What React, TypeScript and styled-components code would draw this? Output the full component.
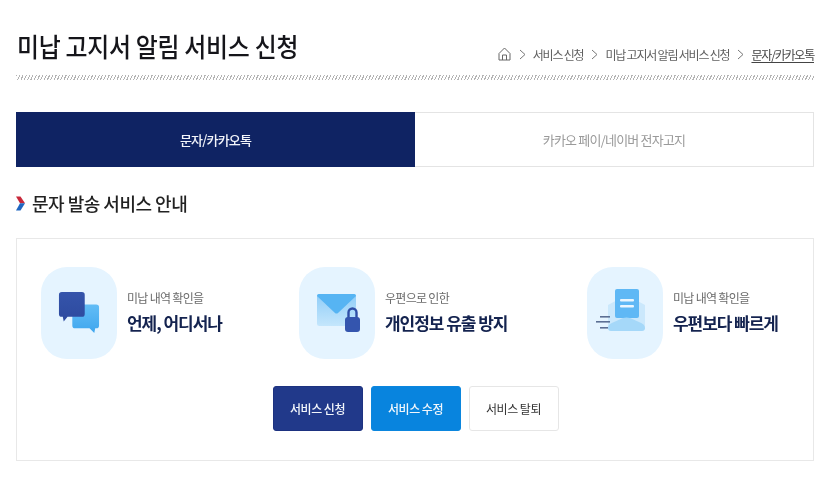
import React from "react";
import styled, { createGlobalStyle } from "styled-components";

const Global = createGlobalStyle`
  html, body { margin: 0; padding: 0; background: #fff; }
  body { font-family: "Noto Sans CJK KR", "Noto Sans", sans-serif; }
`;

const Page = styled.div`
  width: 816px;
  height: 484px;
  box-sizing: border-box;
  padding: 26px 2px 0 16px;
  overflow: hidden;
  filter: blur(0.35px);
`;

const Header = styled.header`
  height: 49px;
  box-sizing: border-box;
  display: flex;
  justify-content: space-between;
  align-items: flex-start;
`;

const Title = styled.h1`
  margin: 0;
  padding-left: 1px;
  font-size: 26px;
  line-height: 40px;
  font-weight: 500;
  color: #15151a;
  letter-spacing: -0.3px;
  transform: scaleX(0.92);
  transform-origin: left center;
`;

const Crumbs = styled.nav`
  display: flex;
  align-items: center;
  height: 20px;
  margin-top: 18px;
  font-size: 12px;
  letter-spacing: -1.2px;
  color: #5a5a5a;
`;

const Crumb = styled.span<{ $current?: boolean }>`
  text-decoration: ${(p) => (p.$current ? "underline" : "none")};
  text-underline-offset: 2px;
  color: ${(p) => (p.$current ? "#444" : "#5f5f5f")};
`;

const Chevron = styled.svg`
  width: 7px;
  height: 11px;
  margin: 0 7px 0 8px;
  fill: none;
  stroke: #777;
  stroke-width: 1;
`;

const Hatch = styled.div`
  height: 5px;
  background: repeating-linear-gradient(115deg, #b4b4b4 0 1px, #fff 1px 3px);
`;

const Tabs = styled.div`
  display: grid;
  grid-template-columns: 399px 399px;
  height: 55px;
  margin-top: 32px;
`;

const Tab = styled.div<{ $active?: boolean }>`
  display: flex;
  align-items: center;
  justify-content: center;
  box-sizing: border-box;
  font-size: 13px;
  letter-spacing: -0.8px;
  font-weight: ${(p) => (p.$active ? 500 : 400)};
  color: ${(p) => (p.$active ? "#f2f4fa" : "#9a9a9a")};
  background: ${(p) => (p.$active ? "#0f2363" : "#fff")};
  border: 1px solid ${(p) => (p.$active ? "#0f2363" : "#e4e4e4")};
  border-left-width: ${(p) => (p.$active ? "1px" : "0")};
`;

const SectionHead = styled.h2`
  display: flex;
  align-items: center;
  gap: 7px;
  margin: 22px 0 0;
  height: 28px;
  font-size: 18px;
  font-weight: 500;
  letter-spacing: -0.5px;
  color: #222;
`;

const Box = styled.section`
  box-sizing: border-box;
  height: 223px;
  margin-top: 21px;
  border: 1px solid #e8e8e8;
  padding: 28px 0 0 24px;
`;

const Features = styled.div`
  display: grid;
  grid-template-columns: 258px 288px 1fr;
`;

const Feature = styled.div`
  display: flex;
  align-items: center;
  gap: 10px;
`;

const Tile = styled.div`
  width: 76px;
  height: 92px;
  border-radius: 26px;
  background: #e5f4ff;
  display: flex;
  align-items: center;
  justify-content: center;
  flex: none;
`;

const TextCol = styled.div`
  display: flex;
  flex-direction: column;
  gap: 4px;
  margin-top: -2px;
`;

const Sub = styled.div`
  font-size: 12px;
  line-height: 18px;
  letter-spacing: -0.7px;
  color: #6b6b6b;
`;

const Strong = styled.div`
  font-size: 17px;
  line-height: 24px;
  font-weight: 700;
  letter-spacing: -1.05px;
  color: #14234f;
`;

const Buttons = styled.div`
  display: flex;
  justify-content: center;
  gap: 8px;
  margin: 27px 0 0 -24px;
  padding-left: 1px;
`;

const Button = styled.button<{ $variant: "navy" | "blue" | "plain" }>`
  width: 90px;
  height: 45px;
  box-sizing: border-box;
  border-radius: 3px;
  font-family: inherit;
  font-size: 12px;
  letter-spacing: -0.5px;
  padding: 0;
  font-weight: ${(p) => (p.$variant === "plain" ? 400 : 500)};
  color: ${(p) => (p.$variant === "plain" ? "#333" : "#f2f6fb")};
  background: ${(p) =>
    p.$variant === "navy" ? "#21398a" : p.$variant === "blue" ? "#0884de" : "#fff"};
  border: 1px solid
    ${(p) => (p.$variant === "navy" ? "#1d3280" : p.$variant === "blue" ? "#0b86de" : "#e6e6e6")};
`;

const Arrow = () => (
  <svg width="9" height="15" viewBox="0 0 9 15" aria-hidden="true">
    <path d="M0 0.5 L4.5 0.5 L9 7.2 L4 7.2 Z" fill="#c8283a" />
    <path d="M4 7.2 L9 7.2 L4.5 14.5 L0 14.5 Z" fill="#1f66c1" />
  </svg>
);

const HomeIcon = () => (
  <svg width="13" height="14" viewBox="0 0 13 14" fill="none" stroke="#666" strokeWidth="1" aria-hidden="true">
    <path d="M1 6.5 L6.5 1 L12 6.5 V13 H1 Z" />
    <path d="M4.5 13 V8 H8.5 V13" />
  </svg>
);

const Sep = () => (
  <Chevron viewBox="0 0 7 11" aria-hidden="true">
    <path d="M1 1 L6 5.5 L1 10" />
  </Chevron>
);

const ChatIcon = () => (
  <svg width="42" height="42" viewBox="0 0 44 44" aria-hidden="true">
    <defs>
      <linearGradient id="chatA" x1="0" y1="0" x2="0" y2="1">
        <stop offset="0" stopColor="#3554ab" />
        <stop offset="1" stopColor="#2d4a9e" />
      </linearGradient>
      <linearGradient id="chatB" x1="0" y1="0" x2="0" y2="1">
        <stop offset="0" stopColor="#63bdf6" />
        <stop offset="1" stopColor="#3fa6ee" />
      </linearGradient>
    </defs>
    <path d="M18 13 H40 a3 3 0 0 1 3 3 V35 a3 3 0 0 1 -3 3 h-1 l-1 5 -5 -5 H18 a3 3 0 0 1 -3 -3 V16 a3 3 0 0 1 3 -3 Z" fill="url(#chatB)" />
    <path d="M4 0 H25 a3 3 0 0 1 3 3 V23 a3 3 0 0 1 -3 3 H10 l-4 5 -1 -5 H4 a3 3 0 0 1 -3 -3 V3 a3 3 0 0 1 3 -3 Z" fill="url(#chatA)" />
  </svg>
);

const LockMailIcon = () => (
  <svg width="48" height="40" viewBox="-4 0 48 40" aria-hidden="true">
    <defs>
      <linearGradient id="mailBody" x1="0" y1="0" x2="0" y2="1">
        <stop offset="0" stopColor="#8fcdf8" />
        <stop offset="1" stopColor="#c4e6fc" />
      </linearGradient>
    </defs>
    <rect x="0" y="1" width="39" height="32" rx="2.5" fill="url(#mailBody)" />
    <path d="M0 3 a2 2 0 0 1 2 -2 H37 a2 2 0 0 1 2 2 L21 20 a2.5 2.5 0 0 1 -3 0 Z" fill="#56b4f3" />
    <path d="M31.5 25 v-5.5 a4 4 0 0 1 8 0 v5.5" fill="none" stroke="#2f4ea6" strokeWidth="2.4" />
    <rect x="28" y="24" width="15" height="15" rx="3" fill="#3455ae" />
  </svg>
);

const OpenMailIcon = () => (
  <svg width="58" height="48" viewBox="0 0 58 48" aria-hidden="true">
    <path d="M12 16 L30.5 6 L49 16 V40 H12 Z" fill="#cbe8fc" />
    <rect x="19" y="0" width="24" height="29" rx="2" fill="#5fb8f5" />
    <rect x="24" y="10" width="14" height="2.4" rx="1" fill="#eaf6ff" />
    <rect x="24" y="16" width="14" height="2.4" rx="1" fill="#eaf6ff" />
    <path d="M12 39 Q12 35 18 33 L27 29 Q30.5 28 34 29 L43 33 Q49 35 49 39 a3 3 0 0 1 -3 3 H15 a3 3 0 0 1 -3 -3 Z" fill="#a5d8f9" />
    <rect x="4" y="27" width="10" height="1.6" fill="#5c6f94" />
    <rect x="0" y="32" width="14" height="1.6" fill="#5c6f94" />
    <rect x="4" y="38" width="8" height="1.6" fill="#5c6f94" />
  </svg>
);

export default function App() {
  return (
    <Page>
      <Global />
      <Header>
        <Title>미납 고지서 알림 서비스 신청</Title>
        <Crumbs>
          <HomeIcon />
          <Sep />
          <Crumb>서비스 신청</Crumb>
          <Sep />
          <Crumb>미납 고지서 알림 서비스 신청</Crumb>
          <Sep />
          <Crumb $current>문자/카카오톡</Crumb>
        </Crumbs>
      </Header>
      <Hatch />
      <Tabs>
        <Tab $active>문자/카카오톡</Tab>
        <Tab>카카오 페이/네이버 전자고지</Tab>
      </Tabs>
      <SectionHead>
        <Arrow />
        문자 발송 서비스 안내
      </SectionHead>
      <Box>
        <Features>
          <Feature>
            <Tile><ChatIcon /></Tile>
            <TextCol>
              <Sub>미납 내역 확인을</Sub>
              <Strong>언제, 어디서나</Strong>
            </TextCol>
          </Feature>
          <Feature>
            <Tile><LockMailIcon /></Tile>
            <TextCol>
              <Sub>우편으로 인한</Sub>
              <Strong>개인정보 유출 방지</Strong>
            </TextCol>
          </Feature>
          <Feature>
            <Tile><OpenMailIcon /></Tile>
            <TextCol>
              <Sub>미납 내역 확인을</Sub>
              <Strong>우편보다 빠르게</Strong>
            </TextCol>
          </Feature>
        </Features>
        <Buttons>
          <Button $variant="navy">서비스 신청</Button>
          <Button $variant="blue">서비스 수정</Button>
          <Button $variant="plain">서비스 탈퇴</Button>
        </Buttons>
      </Box>
    </Page>
  );
}
